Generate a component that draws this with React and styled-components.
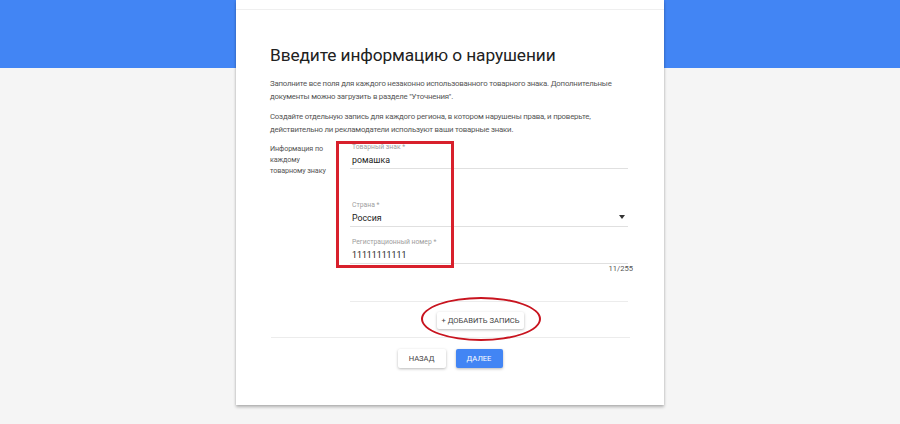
import React from 'react';
import styled, { createGlobalStyle } from 'styled-components';

const GlobalStyle = createGlobalStyle`
  html, body {
    margin: 0;
    padding: 0;
  }
  body {
    font-family: Roboto, "Liberation Sans", Arial, sans-serif;
    background: linear-gradient(#4285f4 0 68px, #f5f5f5 68px) no-repeat, #f5f5f5;
    min-height: 424px;
  }
`;

const Page = styled.div`
  display: flex;
  justify-content: center;
`;

const Card = styled.div`
  width: 428px;
  background: #fff;
  box-shadow: 0 2px 3px rgba(0, 0, 0, 0.28), 0 0 2px rgba(0, 0, 0, 0.08);
`;

const TopStrip = styled.div`
  height: 9px;
  border-bottom: 1px solid #efefef;
`;

const Body = styled.div`
  padding: 33px 34px 37px;
`;

const Title = styled.h1`
  margin: 0;
  font-size: 17.3px;
  line-height: 25px;
  font-weight: 400;
  letter-spacing: -0.1px;
  color: #212121;
`;

const Para = styled.p`
  margin: ${(p) => p.$top}px 0 0;
  font-size: 7.8px;
  line-height: 13px;
  letter-spacing: -0.2px;
  color: #555;
  width: 355px;
`;

const FormRow = styled.div`
  display: flex;
  margin-top: 6px;
`;

const SideLabel = styled.div`
  width: 80px;
  flex: none;
  padding-top: 1px;
  font-size: 7.2px;
  line-height: 11px;
  letter-spacing: -0.1px;
  color: #555;
`;

const Fields = styled.div`
  position: relative;
  flex: none;
  width: 278px;
`;

const Field = styled.div`
  margin-top: ${(p) => p.$top || 0}px;
  padding-left: 2px;
  border-bottom: 1px solid #e0e0e0;
  position: relative;
`;

const FieldLabel = styled.div`
  font-size: 6.8px;
  line-height: 10px;
  color: #9e9e9e;
`;

const FieldValue = styled.div`
  font-size: 8.8px;
  line-height: 16px;
  color: #222;
`;

const Arrow = styled.span`
  position: absolute;
  right: 3px;
  bottom: 7px;
  width: 0;
  height: 0;
  border-left: 3.5px solid transparent;
  border-right: 3.5px solid transparent;
  border-top: 4px solid #333;
`;

const Counter = styled.div`
  text-align: right;
  margin-right: -5px;
  font-size: 7.6px;
  line-height: 10px;
  color: #555;
`;

const Highlight = styled.div`
  position: absolute;
  left: -14px;
  top: -1px;
  width: 112px;
  height: 121px;
  border: 3px solid #d8202c;
  pointer-events: none;
`;

const AddRow = styled.div`
  margin-top: 27px;
  border-top: 1px solid #ececec;
  padding: 10px 17px 8px 0;
  display: flex;
  justify-content: center;
`;

const AddWrap = styled.span`
  position: relative;
  display: inline-flex;
`;

const Ellipse = styled.span`
  position: absolute;
  left: -16px;
  top: -15px;
  width: 116px;
  height: 40px;
  border: 2px solid #c8141f;
  border-radius: 50%;
  pointer-events: none;
`;

const Button = styled.button`
  height: ${(p) => p.$h || 19}px;
  min-width: ${(p) => p.$w || 0}px;
  padding: 0 ${(p) => p.$pad ?? 8}px;
  border: none;
  border-radius: 2px;
  font-family: inherit;
  font-size: 7.6px;
  text-transform: uppercase;
  background: ${(p) => (p.$primary ? '#4285f4' : '#fff')};
  color: ${(p) => (p.$primary ? '#fff' : '#444')};
  box-shadow: 0 1px 3px rgba(0, 0, 0, 0.28);
  cursor: pointer;
`;

const Divider = styled.div`
  border-top: 1px solid #ececec;
  margin: 0 0 0 1px;
`;

const Actions = styled.div`
  display: flex;
  justify-content: center;
  gap: 10px;
  margin-top: 11px;
`;

export default function App() {
  return (
    <>
      <GlobalStyle />
      <Page>
        <Card>
          <TopStrip />
          <Body>
            <Title>Введите информацию о нарушении</Title>
            <Para $top={9}>
              Заполните все поля для каждого незаконно использованного товарного знака. Дополнительные
              документы можно загрузить в разделе "Уточнения".
            </Para>
            <Para $top={7}>
              Создайте отдельную запись для каждого региона, в котором нарушены права, и проверьте,
              действительно ли рекламодатели используют ваши товарные знаки.
            </Para>
            <FormRow>
              <SideLabel>
                Информация по
                <br />
                каждому
                <br />
                товарному знаку
              </SideLabel>
              <Fields>
                <Field>
                  <FieldLabel>Товарный знак *</FieldLabel>
                  <FieldValue>ромашка</FieldValue>
                </Field>
                <Field $top={31}>
                  <FieldLabel>Страна *</FieldLabel>
                  <FieldValue>Россия</FieldValue>
                  <Arrow />
                </Field>
                <Field $top={10}>
                  <FieldLabel>Регистрационный номер *</FieldLabel>
                  <FieldValue>11111111111</FieldValue>
                </Field>
                <Counter>11/255</Counter>
                <Highlight />
                <AddRow>
                  <AddWrap>
                    <Button $h={17} $pad={4}>
                      + Добавить запись
                    </Button>
                    <Ellipse />
                  </AddWrap>
                </AddRow>
              </Fields>
            </FormRow>
            <Divider />
            <Actions>
              <Button $w={48}>Назад</Button>
              <Button $w={47} $primary>
                Далее
              </Button>
            </Actions>
          </Body>
        </Card>
      </Page>
    </>
  );
}
